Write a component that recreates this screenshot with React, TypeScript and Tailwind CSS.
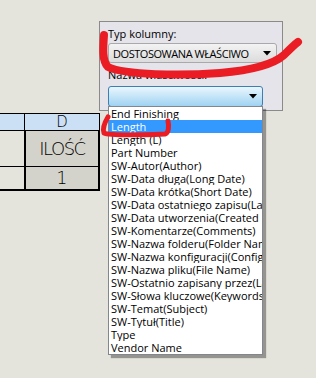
import React from "react";

const items = [
  "End Finishing",
  "Length",
  "Length (L)",
  "Part Number",
  "SW-Autor(Author)",
  "SW-Data długa(Long Date)",
  "SW-Data krótka(Short Date)",
  "SW-Data ostatniego zapisu(Last Saved Date)",
  "SW-Data utworzenia(Created Date)",
  "SW-Komentarze(Comments)",
  "SW-Nazwa folderu(Folder Name)",
  "SW-Nazwa konfiguracji(Configuration Name)",
  "SW-Nazwa pliku(File Name)",
  "SW-Ostatnio zapisany przez(Last Saved By)",
  "SW-Słowa kluczowe(Keywords)",
  "SW-Temat(Subject)",
  "SW-Tytuł(Title)",
  "Type",
  "Vendor Name",
];

function Arrow() {
  return (
    <svg width="8" height="5" viewBox="0 0 8 5" className="shrink-0">
      <path d="M0 0 H8 L4 4.5 Z" fill="#000" />
    </svg>
  );
}

export default function App() {
  const ui = { fontFamily: '"Open Sans", "Noto Sans", sans-serif' };
  const cad = { fontFamily: '"DejaVu Sans", sans-serif' };
  return (
    <div className="relative w-[316px] h-[378px] overflow-hidden bg-[#e5e4dc]" style={ui}>
      {/* drawing table */}
      <div className="pt-[113px]">
        <div className="w-[100px] border-t border-black">
          <div className="flex h-[17px] bg-[#cbe0f5] border-b border-black">
            <div className="w-[25px] border-r border-black" />
            <div
              className="w-[75px] border-r border-black flex items-center justify-center text-[15px] leading-none text-black font-extralight pt-[1px]"
              style={cad}
            >
              D
            </div>
          </div>
          <div className="flex h-[36px] border-b border-black">
            <div className="w-[24px]" />
            <div
              className="w-[76px] bg-[#d3d2cb] border-x-2 border-black flex items-center justify-center text-[18px] leading-none text-black font-extralight tracking-[-1.5px]"
              style={cad}
            >
              ILOŚĆ
            </div>
          </div>
          <div className="flex h-[24px] border-b-2 border-black">
            <div className="w-[24px]" />
            <div
              className="w-[76px] bg-[#d3d2cb] border-x-2 border-black flex items-center justify-center text-[17px] leading-none text-black font-extralight"
              style={cad}
            >
              1
            </div>
          </div>
        </div>
      </div>

      {/* property panel */}
      <div className="absolute left-[99px] top-[21px] w-[184px] h-[90px] bg-[#e4e4ea] border border-[#8a8a8a] pl-[8px] pt-[4px]">
        <div className="text-[11px] leading-[16px] text-black">Typ kolumny:</div>
        <div className="mt-[1px] w-[169px] h-[20px] rounded-[3px] border border-[#a9a9a9] bg-gradient-to-b from-[#f3f3f3] to-[#dcdcdc] flex items-center justify-between pl-[4px] pr-[5px]">
          <span className="text-[11px] leading-none text-black whitespace-nowrap tracking-[-0.45px]">DOSTOSOWANA WŁAŚCIWO</span>
          <Arrow />
        </div>
        <div className="mt-[4px] text-[11px] leading-[16px] text-black">Nazwa właściwości:</div>
        <div className="mt-[3px] w-[155px] h-[21px] rounded-[3px] border border-[#3c7fb1] bg-gradient-to-b from-[#eaf6fd] via-[#c4e5f8] to-[#9fd2f2] flex items-center justify-end pr-[5px]">
          <Arrow />
        </div>
      </div>

      {/* dropdown list */}
      <div className="absolute left-[108px] top-[106px] w-[155px] bg-white border border-[#82868f] shadow-[3px_3px_1px_rgba(0,0,0,0.35)]">
        {items.map((t, i) => (
          <div
            key={t}
            className={
              "h-[13px] leading-[13px] text-[11px] pl-[2px] whitespace-nowrap overflow-hidden " +
              (i === 1 ? "bg-[#3399ff] text-white" : "text-black")
            }
          >
            {t}
          </div>
        ))}
      </div>

      {/* red annotations */}
      <svg className="absolute inset-0 pointer-events-none" width="316" height="378" viewBox="0 0 316 378">
        <path
          d="M104,35 C103,48 102,61 108,67 C125,75 180,76 220,73 C255,70 275,63 284,55 C290,49 294,45 298,42"
          fill="none"
          stroke="#ea1c24"
          strokeWidth="8"
          strokeLinecap="round"
          strokeLinejoin="round"
        />
        <path
          d="M108,117 C105,122 102,128 104,133 C110,136 140,135 165,134 C169,133 169,126 168,121"
          fill="none"
          stroke="#ea1c24"
          strokeWidth="5"
          strokeLinecap="round"
          strokeLinejoin="round"
        />
      </svg>
    </div>
  );
}
